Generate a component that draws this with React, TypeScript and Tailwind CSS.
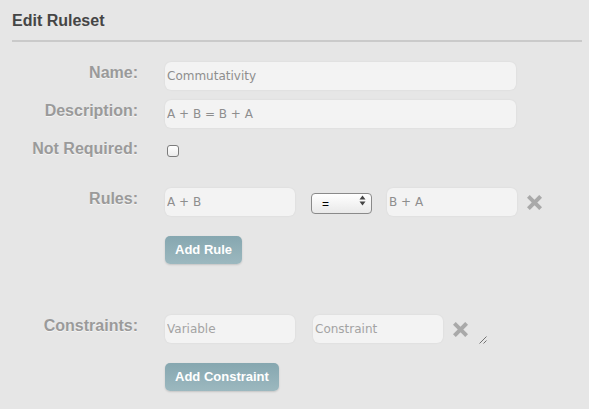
import type { ReactNode } from "react";

const labelFont = { fontFamily: '"Liberation Sans", Arial, sans-serif' };
const fieldFont = { fontFamily: '"DejaVu Sans", Verdana, sans-serif' };

function FieldRow({
  label,
  children,
  className = "",
}: {
  label?: string;
  children: ReactNode;
  className?: string;
}) {
  return (
    <div className={`flex items-start ${className}`}>
      <div
        className="w-[126px] shrink-0 text-right text-[16px] leading-[20px] font-bold text-[#9a9a9a] [text-shadow:0_1px_0_rgba(255,255,255,0.6)] mt-[1px]"
        style={labelFont}
      >
        {label}
      </div>
      <div className="ml-[27px] flex items-center">{children}</div>
    </div>
  );
}

function TextBox({
  value,
  placeholder,
  width,
}: {
  value?: string;
  placeholder?: string;
  width: string;
}) {
  return (
    <input
      type="text"
      defaultValue={value}
      placeholder={placeholder}
      className={`${width} h-[28px] px-[2px] rounded-[6px] bg-[#f3f3f3] text-[12px] text-[#8e8e8e] placeholder:text-[#a3a3a3] outline-none shadow-[0_0_2px_rgba(0,0,0,0.08)]`}
      style={fieldFont}
    />
  );
}

function RemoveIcon() {
  return (
    <svg width="15" height="15" viewBox="0 0 15 15" className="shrink-0">
      <path
        d="M2.8 2.8l9.4 9.4M12.2 2.8l-9.4 9.4"
        stroke="#a9a9a9"
        strokeWidth="4"
        strokeLinecap="square"
      />
    </svg>
  );
}

function AddButton({ children }: { children: ReactNode }) {
  return (
    <button
      type="button"
      className="h-[28px] px-[10px] rounded-[5px] bg-gradient-to-b from-[#86a7b0] to-[#9cb8bf] text-white text-[13px] font-bold shadow-[0_1px_2px_rgba(0,0,0,0.15)]"
      style={labelFont}
    >
      {children}
    </button>
  );
}

export default function App() {
  return (
    <div className="w-[589px] h-[409px] bg-[#e6e6e6] pl-[12px] pt-[11px] overflow-hidden">
      <h1
        className="text-[16px] leading-[20px] font-bold text-[#454545]"
        style={labelFont}
      >
        Edit Ruleset
      </h1>
      <div className="mt-[9px] w-[570px] h-[2px] bg-[#cacaca]" />

      <FieldRow label="Name:" className="mt-[20px]">
        <TextBox value="Commutativity" width="w-[351px]" />
      </FieldRow>

      <FieldRow label="Description:" className="mt-[10px]">
        <TextBox value="A + B = B + A" width="w-[351px]" />
      </FieldRow>

      <FieldRow label="Not Required:" className="mt-[10px]">
        <input
          type="checkbox"
          className="appearance-none mt-[7px] ml-[2px] w-[12px] h-[12px] rounded-[3px] border border-[#7c7c7c] bg-gradient-to-b from-white to-[#ececec]"
        />
      </FieldRow>

      <FieldRow label="Rules:" className="mt-[29px]">
        <TextBox value="A + B" width="w-[130px]" />
        <div className="relative ml-[16px]">
          <select
            className="appearance-none w-[61px] h-[21px] pl-[10px] rounded-[4px] border border-[#8a8a8a] bg-gradient-to-b from-white to-[#e9e9e9] text-[12px] text-black outline-none"
            style={labelFont}
            defaultValue="="
          >
            <option value="=">=</option>
            <option value="<">&lt;</option>
            <option value=">">&gt;</option>
          </select>
          <svg
            width="7"
            height="11"
            viewBox="0 0 7 11"
            className="absolute right-[6px] top-[5px] pointer-events-none"
          >
            <path d="M3.5 0.5L6.5 4.5H0.5Z M3.5 10.5L0.5 6.5H6.5Z" fill="#444" />
          </svg>
        </div>
        <div className="ml-[15px]">
          <TextBox value="B + A" width="w-[130px]" />
        </div>
        <div className="ml-[10px]">
          <RemoveIcon />
        </div>
      </FieldRow>

      <FieldRow className="mt-[20px]">
        <AddButton>Add Rule</AddButton>
      </FieldRow>

      <FieldRow label="Constraints:" className="mt-[51px]">
        <TextBox placeholder="Variable" width="w-[130px]" />
        <div className="ml-[18px]">
          <TextBox placeholder="Constraint" width="w-[130px]" />
        </div>
        <div className="ml-[10px]">
          <RemoveIcon />
        </div>
        <svg
          width="8"
          height="8"
          viewBox="0 0 8 8"
          className="ml-[11px] self-end mb-[-1px]"
        >
          <path d="M7.5 0.5L0.5 7.5M7.5 4.5L4.5 7.5" stroke="#555" strokeWidth="0.8" />
        </svg>
      </FieldRow>

      <FieldRow className="mt-[20px]">
        <AddButton>Add Constraint</AddButton>
      </FieldRow>
    </div>
  );
}
